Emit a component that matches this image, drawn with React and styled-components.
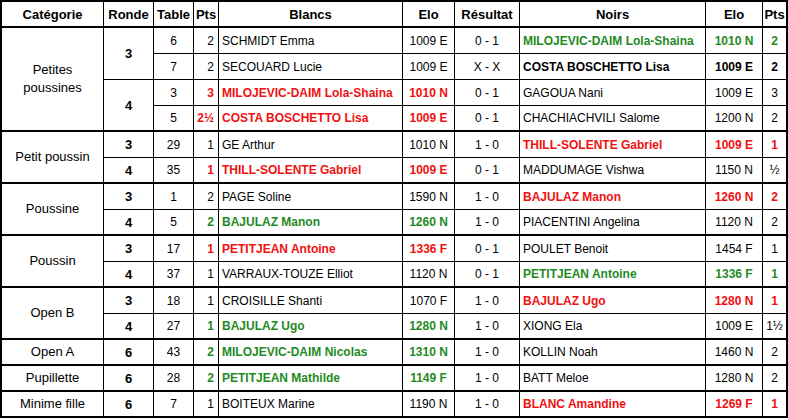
import React from "react";
import styled, { createGlobalStyle } from "styled-components";

const Global = createGlobalStyle`
  html, body { margin: 0; padding: 0; background: #ffffff; }
  body { font-family: "Liberation Sans", Arial, sans-serif; }
`;

const COLORS = { red: "#f01010", green: "#1f8a1f", black: "#000000" };

const Table = styled.table`
  border-collapse: separate;
  border-spacing: 0;
  table-layout: fixed;
  width: 788px;
  border-left: 2px solid #000;
  border-top: 2px solid #000;
  box-sizing: border-box;
  font-family: "Liberation Sans", Arial, sans-serif;
  color: #000;
`;

const Cell = styled.td`
  box-sizing: border-box;
  height: 26px;
  padding: ${(p) =>
    p.$align === "left" ? "0 0 0 3px" : p.$align === "right" ? "0 4px 0 0" : "0"};
  border-right: ${(p) => (p.$last ? 2 : 1)}px solid #000;
  border-bottom: ${(p) => (p.$end ? 2 : 1)}px solid #000;
  text-align: ${(p) => p.$align || "center"};
  vertical-align: middle;
  font-size: 12px;
  line-height: 14px;
  font-weight: ${(p) => (p.$bold ? 700 : 400)};
  color: ${(p) => COLORS[p.$color || "black"]};
  white-space: nowrap;
  overflow: hidden;
`;

const HeadCell = styled.th`
  box-sizing: border-box;
  height: 26px;
  padding: 0;
  border-right: ${(p) => (p.$last ? 2 : 1)}px solid #000;
  border-bottom: 2px solid #000;
  font-size: 13px;
  line-height: 15px;
  font-weight: 700;
  text-align: center;
  vertical-align: middle;
  white-space: nowrap;
`;

const CatCell = styled.td`
  box-sizing: border-box;
  padding: 0 6px;
  border-right: 1px solid #000;
  border-bottom: 2px solid #000;
  font-size: 13px;
  line-height: 18px;
  text-align: center;
  vertical-align: middle;
`;

const RondeCell = styled.td`
  box-sizing: border-box;
  padding: 0;
  border-right: 1px solid #000;
  border-bottom: ${(p) => (p.$end ? 2 : 1)}px solid #000;
  font-size: 13px;
  line-height: 15px;
  font-weight: 700;
  text-align: center;
  vertical-align: middle;
`;

const cols = [102, 50, 40, 25, 184, 52, 65, 186, 57, 25];
const heads = ["Catégorie", "Ronde", "Table", "Pts", "Blancs", "Elo", "Résultat", "Noirs", "Elo", "Pts"];

// row: [table, pts, ptsColor, blanc, bColor, bElo, result, noir, nColor, nElo, nPts]
const groups = [
  {
    cat: "Petites poussines",
    rondes: [
      {
        r: 3,
        rows: [
          ["6", "2", null, "SCHMIDT Emma", null, "1009 E", "0 - 1", "MILOJEVIC-DAIM Lola-Shaina", "green", "1010 N", "2"],
          ["7", "2", null, "SECOUARD Lucie", null, "1009 E", "X - X", "COSTA BOSCHETTO Lisa", "bold", "1009 E", "2"],
        ],
      },
      {
        r: 4,
        rows: [
          ["3", "3", "red", "MILOJEVIC-DAIM Lola-Shaina", "red", "1010 N", "0 - 1", "GAGOUA Nani", null, "1009 E", "3"],
          ["5", "2½", "red", "COSTA BOSCHETTO Lisa", "red", "1009 E", "0 - 1", "CHACHIACHVILI Salome", null, "1200 N", "2"],
        ],
      },
    ],
  },
  {
    cat: "Petit poussin",
    rondes: [
      { r: 3, rows: [["29", "1", null, "GE Arthur", null, "1010 N", "1 - 0", "THILL-SOLENTE Gabriel", "red", "1009 E", "1"]] },
      { r: 4, rows: [["35", "1", "red", "THILL-SOLENTE Gabriel", "red", "1009 E", "0 - 1", "MADDUMAGE Vishwa", null, "1150 N", "½"]] },
    ],
  },
  {
    cat: "Poussine",
    rondes: [
      { r: 3, rows: [["1", "2", null, "PAGE Soline", null, "1590 N", "1 - 0", "BAJULAZ Manon", "red", "1260 N", "2"]] },
      { r: 4, rows: [["5", "2", "green", "BAJULAZ Manon", "green", "1260 N", "1 - 0", "PIACENTINI Angelina", null, "1120 N", "2"]] },
    ],
  },
  {
    cat: "Poussin",
    rondes: [
      { r: 3, rows: [["17", "1", "red", "PETITJEAN Antoine", "red", "1336 F", "0 - 1", "POULET Benoit", null, "1454 F", "1"]] },
      { r: 4, rows: [["37", "1", null, "VARRAUX-TOUZE Elliot", null, "1120 N", "0 - 1", "PETITJEAN Antoine", "green", "1336 F", "1"]] },
    ],
  },
  {
    cat: "Open B",
    rondes: [
      { r: 3, rows: [["18", "1", null, "CROISILLE Shanti", null, "1070 F", "1 - 0", "BAJULAZ Ugo", "red", "1280 N", "1"]] },
      { r: 4, rows: [["27", "1", "green", "BAJULAZ Ugo", "green", "1280 N", "1 - 0", "XIONG Ela", null, "1009 E", "1½"]] },
    ],
  },
  {
    cat: "Open A",
    rondes: [{ r: 6, rows: [["43", "2", "green", "MILOJEVIC-DAIM Nicolas", "green", "1310 N", "1 - 0", "KOLLIN Noah", null, "1460 N", "2"]] }],
  },
  {
    cat: "Pupillette",
    rondes: [{ r: 6, rows: [["28", "2", "green", "PETITJEAN Mathilde", "green", "1149 F", "1 - 0", "BATT Meloe", null, "1280 N", "2"]] }],
  },
  {
    cat: "Minime fille",
    rondes: [{ r: 6, rows: [["7", "1", null, "BOITEUX Marine", null, "1190 N", "1 - 0", "BLANC Amandine", "red", "1269 F", "1"]] }],
  },
];

const style = (c) => ({
  $bold: !!c,
  $color: c === "red" || c === "green" ? c : "black",
});

export default function App() {
  const body = [];
  groups.forEach((g, gi) => {
    const total = g.rondes.reduce((n, r) => n + r.rows.length, 0);
    let idx = 0;
    g.rondes.forEach((rd, ri) => {
      rd.rows.forEach((row, rri) => {
        const [tbl, pts, pc, blanc, bc, belo, res, noir, nc, nelo, npts] = row;
        const end = idx === total - 1;
        body.push(
          <tr key={`${gi}-${ri}-${rri}`}>
            {idx === 0 && <CatCell rowSpan={total}>{g.cat}</CatCell>}
            {rri === 0 && (
              <RondeCell rowSpan={rd.rows.length} $end={ri === g.rondes.length - 1}>
                {rd.r}
              </RondeCell>
            )}
            <Cell $end={end}>{tbl}</Cell>
            <Cell $end={end} $align="right" {...style(pc)}>{pts}</Cell>
            <Cell $end={end} $align="left" {...style(bc)}>{blanc}</Cell>
            <Cell $end={end} {...style(bc)}>{belo}</Cell>
            <Cell $end={end}>{res}</Cell>
            <Cell $end={end} $align="left" {...style(nc)}>{noir}</Cell>
            <Cell $end={end} {...style(nc)}>{nelo}</Cell>
            <Cell $end={end} $last {...style(nc)}>{npts}</Cell>
          </tr>
        );
        idx++;
      });
    });
  });

  return (
    <>
      <Global />
      <Table>
        <colgroup>
          {cols.map((w, i) => (
            <col key={i} style={{ width: `${w}px` }} />
          ))}
        </colgroup>
        <thead>
          <tr>
            {heads.map((h, i) => (
              <HeadCell key={i} $last={i === heads.length - 1}>
                {h}
              </HeadCell>
            ))}
          </tr>
        </thead>
        <tbody>{body}</tbody>
      </Table>
    </>
  );
}
